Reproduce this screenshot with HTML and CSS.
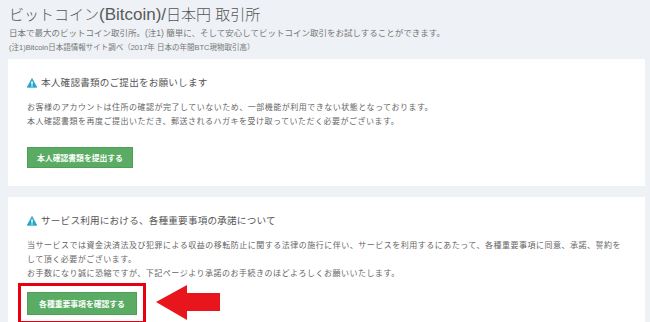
FILE: index.html
```html
<!DOCTYPE html>
<html>

<head lang="ja">
    <meta charset="UTF-8">
    <title>ビットコイン取引所</title>
    <link rel="stylesheet" href="styles.css">
</head>

<body>
    <div class="header">
        <h1>ビットコイン<span class="latin">(Bitcoin)/</span>日本円 取引所</h1>
        <p class="lead">日本で最大のビットコイン取引所。(注1) 簡単に、そして安心してビットコイン取引をお試しすることができます。</p>
        <p class="note">(注1)Bitcoin日本語情報サイト調べ（2017年 日本の年間BTC現物取引高）</p>
    </div>

    <div class="card">
        <h2>
            <svg class="warn" width="10" height="10" viewBox="0 0 20 20">
                <path d="M10 1 L19.5 18.5 L0.5 18.5 Z" fill="#22a5c9" stroke="#22a5c9" stroke-width="1.5" stroke-linejoin="round" />
                <rect x="8.6" y="6.5" width="2.8" height="7" fill="#fff" />
                <rect x="8.6" y="14.8" width="2.8" height="2.4" fill="#fff" />
            </svg>
            本人確認書類のご提出をお願いします
        </h2>
        <p class="text">お客様のアカウントは住所の確認が完了していないため、一部機能が利用できない状態となっております。<br>本人確認書類を再度ご提出いただき、郵送されるハガキを受け取っていただく必要がございます。</p>
        <button type="button" class="btn">本人確認書類を提出する</button>
    </div>

    <div class="card last">
        <h2>
            <svg class="warn" width="10" height="10" viewBox="0 0 20 20">
                <path d="M10 1 L19.5 18.5 L0.5 18.5 Z" fill="#22a5c9" stroke="#22a5c9" stroke-width="1.5" stroke-linejoin="round" />
                <rect x="8.6" y="6.5" width="2.8" height="7" fill="#fff" />
                <rect x="8.6" y="14.8" width="2.8" height="2.4" fill="#fff" />
            </svg>
            サービス利用における、各種重要事項の承諾について
        </h2>
        <p class="text">当サービスでは資金決済法及び犯罪による収益の移転防止に関する法律の施行に伴い、サービスを利用するにあたって、各種重要事項に同意、承諾、誓約をして頂く必要がございます。<br>お手数になり誠に恐縮ですが、下記ページより承諾のお手続きのほどよろしくお願いいたします。</p>
        <div class="action">
            <div class="mark">
                <button type="button" class="btn">各種重要事項を確認する</button>
            </div>
            <svg class="arrow" width="66" height="38" viewBox="0 0 66 38">
                <path d="M0 17 L31 0 L31 8 L64 8 L64 26 L31 26 L31 35 Z" fill="#e8151d" />
            </svg>
        </div>
    </div>
</body>

</html>
```

FILE: styles.css
```css
* {
    margin: 0;
    padding: 0;
}

body {
    background-color: #eef1f5;
    font-family: "Liberation Sans", "Noto Sans CJK JP", sans-serif;
    color: #666;
    overflow: hidden;
}

.header {
    padding: 4px 9px 5px;
}

h1 {
    font-size: 15px;
    font-weight: 300;
    line-height: 21px;
    color: #555;
}

h1 .latin {
    font-size: 17px;
    font-weight: normal;
    color: #5a5a5a;
}

.lead {
    font-size: 8.5px;
    line-height: 14px;
    margin-top: 1px;
    color: #777;
}

.note {
    font-size: 7.5px;
    line-height: 12px;
    margin-top: 2px;
    color: #777;
}

.card {
    background-color: #fff;
    margin: 0 5px 11px 8px;
    padding: 17px 18px 18px 19px;
}

.card h2 {
    display: flex;
    align-items: center;
    gap: 4px;
    font-size: 9.6px;
    font-weight: normal;
    line-height: 14px;
    color: #555;
    letter-spacing: 0.2px;
}

.warn {
    flex: none;
}

.text {
    margin-top: 11px;
    font-size: 8px;
    letter-spacing: 0.5px;
    line-height: 14px;
    color: #666;
}

.btn {
    display: block;
    margin-top: 18px;
    width: 106px;
    height: 21px;
    border: 1px solid #4f9e58;
    background-color: #5aac64;
    color: #fff;
    font-family: "Noto Sans CJK JP", sans-serif;
    font-size: 7.8px;
    font-weight: bold;
    cursor: pointer;
}

.action {
    display: flex;
    align-items: center;
    gap: 10px;
    margin-top: 2px;
}

.mark {
    border: 3px solid #e60012;
    padding: 6px;
    margin-left: -9px;
}

.mark .btn {
    margin-top: 0;
    width: 110px;
    height: 23px;
}

.arrow {
    flex: none;
}

.last {
    padding-bottom: 30px;
}
```
